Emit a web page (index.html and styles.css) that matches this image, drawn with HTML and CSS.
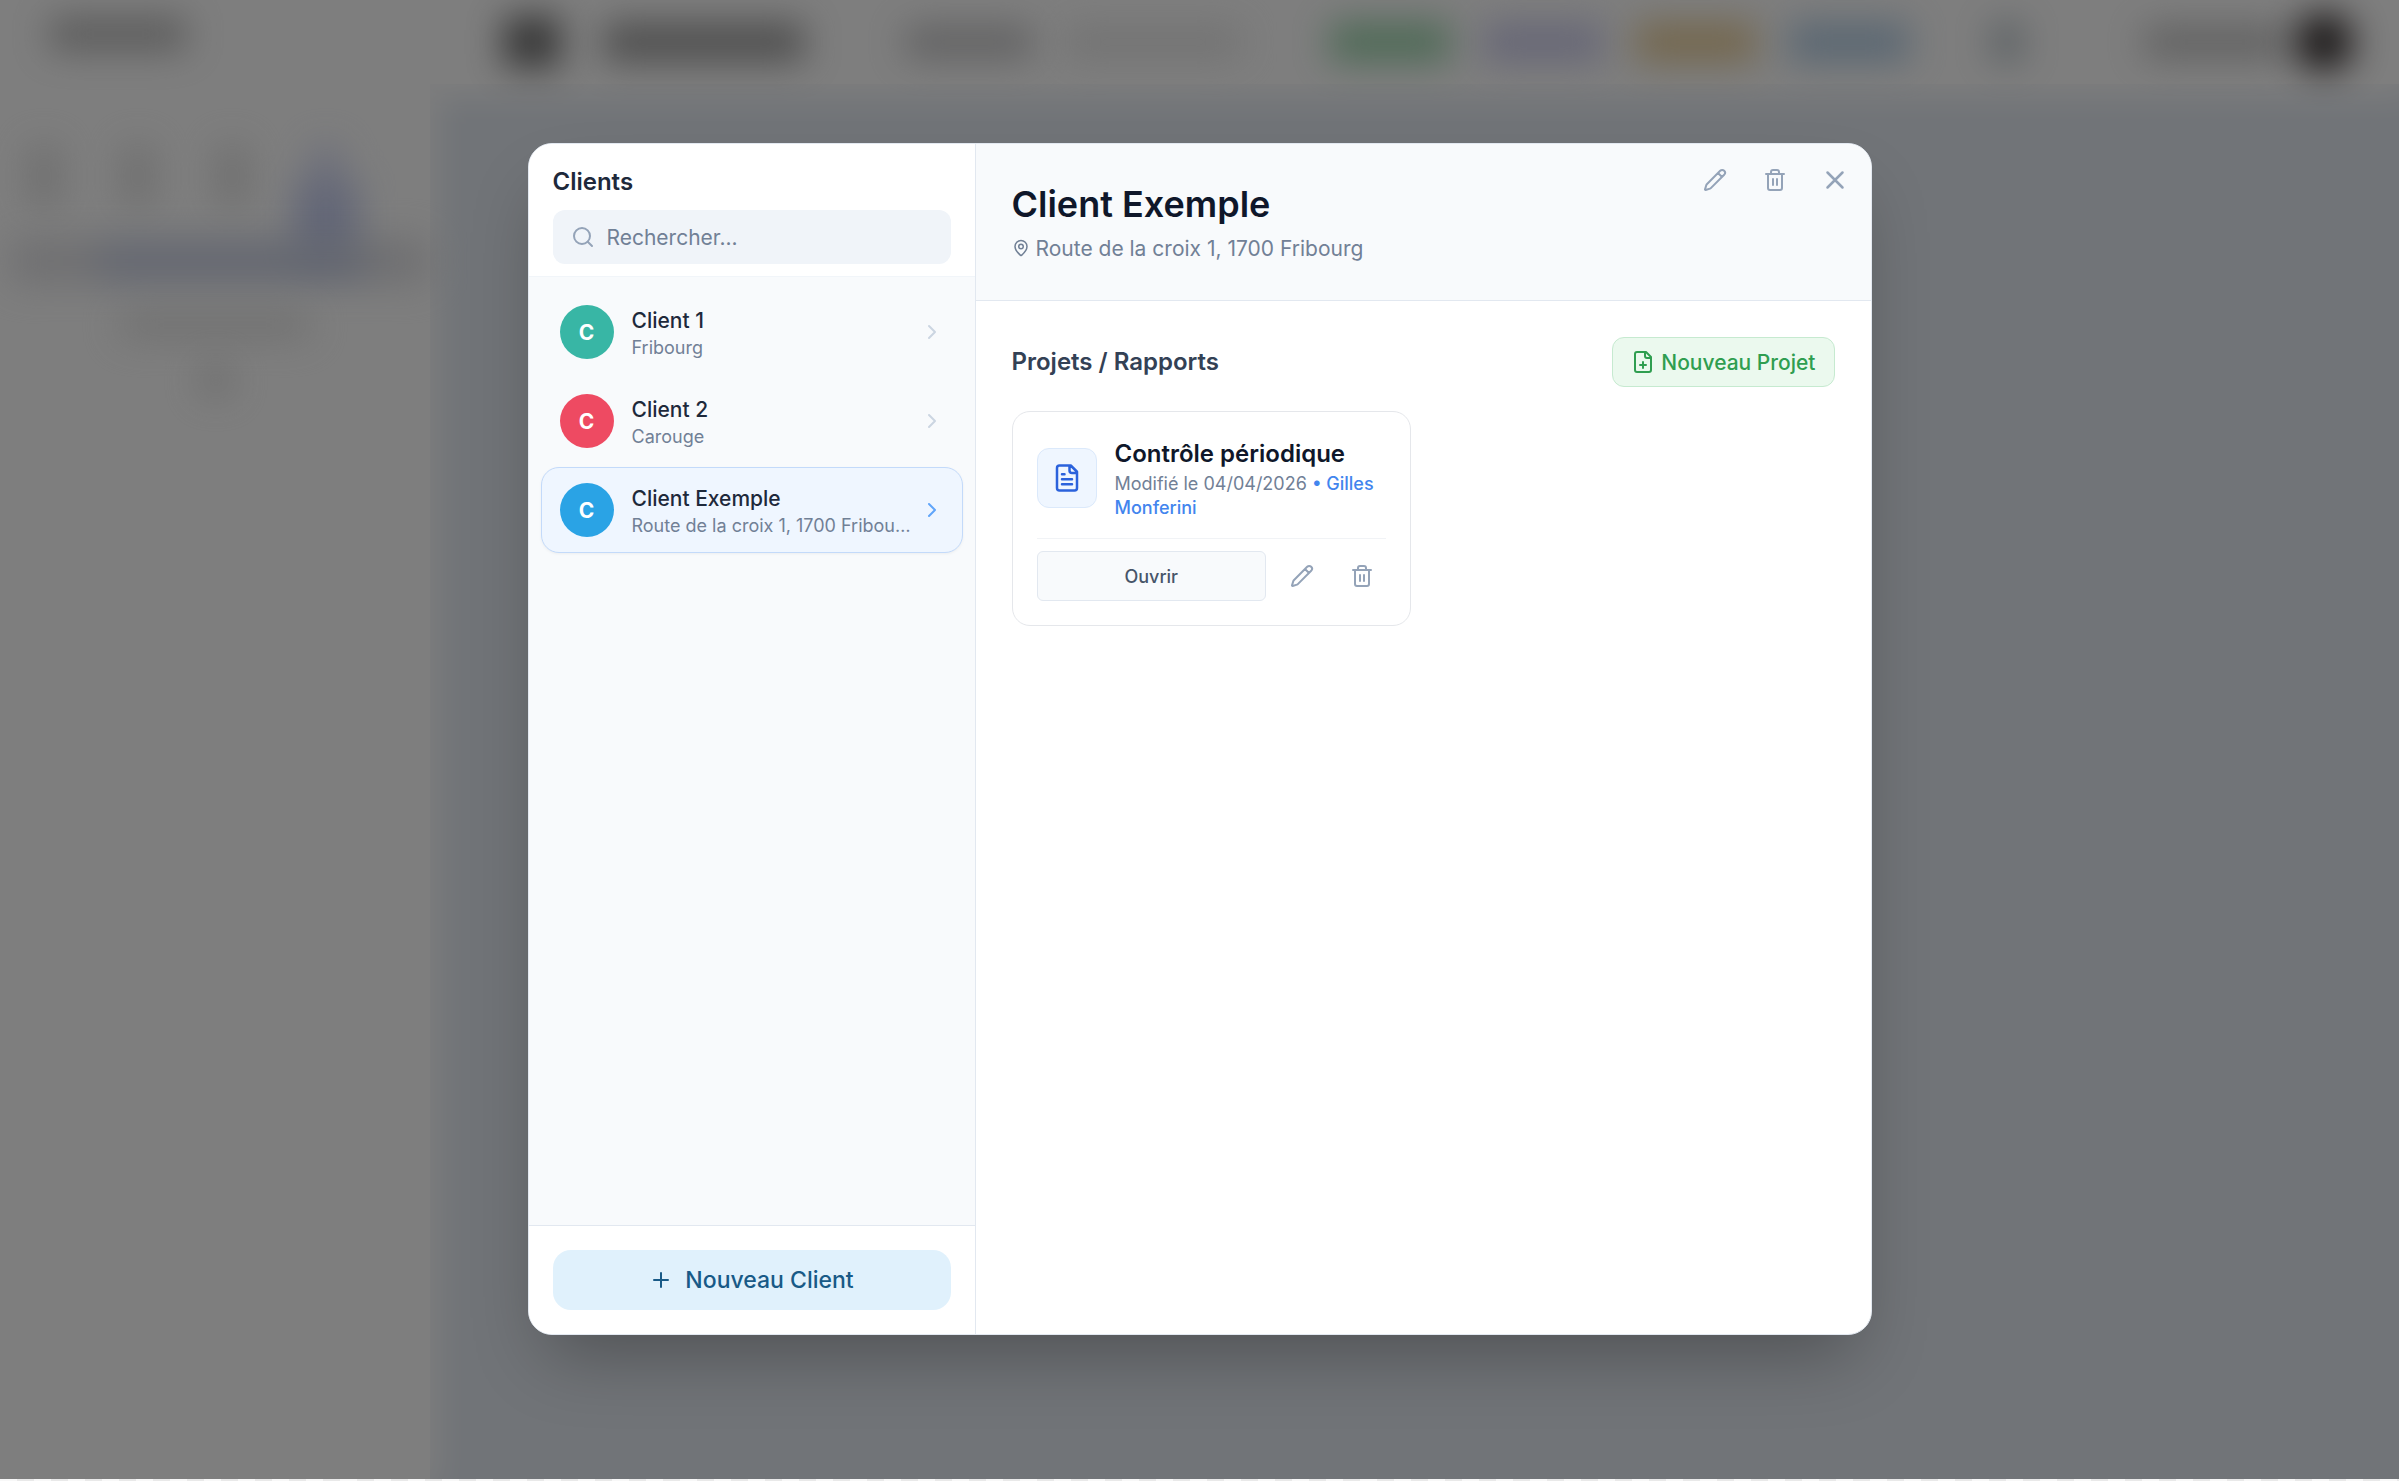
FILE: index.html
```html
<!DOCTYPE html>
<html lang="fr">
<head>
<meta charset="utf-8">
<meta name="viewport" content="width=device-width, initial-scale=1">
<title>Clients</title>
<link rel="stylesheet" href="styles.css">
</head>
<body>
<svg class="sprite" aria-hidden="true">
  <symbol id="i-search" viewBox="0 0 24 24"><circle cx="11" cy="11" r="8"/><path d="m21 21-4.3-4.3"/></symbol>
  <symbol id="i-chevron" viewBox="0 0 24 24"><path d="m9 18 6-6-6-6"/></symbol>
  <symbol id="i-plus" viewBox="0 0 24 24"><path d="M5 12h14M12 5v14"/></symbol>
  <symbol id="i-x" viewBox="0 0 24 24"><path d="M18 6 6 18M6 6l12 12"/></symbol>
  <symbol id="i-pin" viewBox="0 0 24 24"><path d="M20 10c0 4.993-5.539 10.193-7.399 11.799a1 1 0 0 1-1.202 0C9.539 20.193 4 14.993 4 10a8 8 0 0 1 16 0"/><circle cx="12" cy="10" r="3"/></symbol>
  <symbol id="i-pencil" viewBox="0 0 24 24"><path d="M21.174 6.812a1 1 0 0 0-3.986-3.987L3.842 16.174a2 2 0 0 0-.5.83l-1.321 4.352a.5.5 0 0 0 .623.622l4.353-1.32a2 2 0 0 0 .83-.497zM15 5l4 4"/></symbol>
  <symbol id="i-trash" viewBox="0 0 24 24"><path d="M3 6h18M19 6v14a2 2 0 0 1-2 2H7a2 2 0 0 1-2-2V6M8 6V4a2 2 0 0 1 2-2h4a2 2 0 0 1 2 2v2M10 11v6M14 11v6"/></symbol>
  <symbol id="i-file" viewBox="0 0 24 24"><path d="M15 2H6a2 2 0 0 0-2 2v16a2 2 0 0 0 2 2h12a2 2 0 0 0 2-2V7ZM14 2v4a2 2 0 0 0 2 2h4M10 9H8M16 13H8M16 17H8"/></symbol>
  <symbol id="i-file-plus" viewBox="0 0 24 24"><path d="M15 2H6a2 2 0 0 0-2 2v16a2 2 0 0 0 2 2h12a2 2 0 0 0 2-2V7ZM14 2v4a2 2 0 0 0 2 2h4M9 15h6M12 18v-6"/></symbol>
</svg>

<div class="app" aria-hidden="true">
  <div class="rail">
    <div class="rail-title"></div>
    <div class="rail-tabs"><i></i><i></i><i></i><i class="on"></i></div>
    <div class="rail-bar"></div>
    <div class="rail-note"></div>
    <div class="rail-dot"></div>
  </div>
  <div class="stage">
    <div class="topbar">
      <i class="logo"></i><i class="brand"></i>
      <i class="crumb"></i><i class="crumb faint"></i>
      <i class="pill green"></i><i class="pill violet"></i><i class="pill amber"></i><i class="pill sky"></i>
      <i class="tool"></i><i class="user"></i><i class="face"></i>
    </div>
  </div>
</div>

<div class="overlay">
  <section class="dialog" role="dialog" aria-modal="true" aria-labelledby="dialog-title">
    <aside class="sidebar">
      <header class="side-head">
        <h2 class="side-title" id="dialog-title">Clients</h2>
        <label class="search">
          <svg class="icon"><use href="#i-search"/></svg>
          <input type="search" placeholder="Rechercher..." aria-label="Rechercher">
        </label>
      </header>
      <nav class="list">
        <a class="client" href="#client-1">
          <span class="avatar teal">C</span>
          <span class="who"><span class="name">Client 1</span><span class="place">Fribourg</span></span>
          <svg class="icon"><use href="#i-chevron"/></svg>
        </a>
        <a class="client" href="#client-2">
          <span class="avatar red">C</span>
          <span class="who"><span class="name">Client 2</span><span class="place">Carouge</span></span>
          <svg class="icon"><use href="#i-chevron"/></svg>
        </a>
        <a class="client active" href="#client-exemple" aria-current="true">
          <span class="avatar blue">C</span>
          <span class="who"><span class="name">Client Exemple</span><span class="place">Route de la croix 1, 1700 Fribourg</span></span>
          <svg class="icon"><use href="#i-chevron"/></svg>
        </a>
      </nav>
      <footer class="side-foot">
        <button class="new-client" type="button"><svg class="icon"><use href="#i-plus"/></svg>Nouveau Client</button>
      </footer>
    </aside>

    <main class="detail">
      <header class="detail-head">
        <div>
          <h1 class="client-title">Client Exemple</h1>
          <p class="address"><svg class="icon small"><use href="#i-pin"/></svg>Route de la croix 1, 1700 Fribourg</p>
        </div>
        <div class="actions">
          <button class="icon-btn" type="button" aria-label="Modifier le client"><svg class="icon"><use href="#i-pencil"/></svg></button>
          <button class="icon-btn" type="button" aria-label="Supprimer le client"><svg class="icon"><use href="#i-trash"/></svg></button>
          <button class="icon-btn" type="button" aria-label="Fermer"><svg class="icon large"><use href="#i-x"/></svg></button>
        </div>
      </header>
      <div class="detail-body">
        <div class="section-head">
          <h2 class="section-title">Projets / Rapports</h2>
          <button class="new-project" type="button"><svg class="icon"><use href="#i-file-plus"/></svg>Nouveau Projet</button>
        </div>
        <div class="cards">
          <article class="card">
            <div class="card-top">
              <span class="tile"><svg class="icon large"><use href="#i-file"/></svg></span>
              <div>
                <h3 class="card-title">Contrôle périodique</h3>
                <p class="meta">Modifié le 04/04/2026 <span class="author">• Gilles Monferini</span></p>
              </div>
            </div>
            <div class="card-actions">
              <button class="open" type="button">Ouvrir</button>
              <button class="icon-btn" type="button" aria-label="Modifier le projet"><svg class="icon"><use href="#i-pencil"/></svg></button>
              <button class="icon-btn" type="button" aria-label="Supprimer le projet"><svg class="icon"><use href="#i-trash"/></svg></button>
            </div>
          </article>
        </div>
      </div>
    </main>
  </section>
</div>
<div class="edge"></div>
</body>
</html>
```

FILE: styles.css
```css
* { box-sizing: border-box; }

body {
  margin: 0;
  min-height: 100vh;
  display: grid;
  grid-template-rows: 1fr 2px;
  font-family: Inter, "Noto Sans", sans-serif;
  color: #1e293b;
  overflow: hidden;
}

h1, h2, h3, p { margin: 0; }
button, input { font: inherit; }
button { cursor: pointer; }
.sprite { position: absolute; width: 0; height: 0; }

.icon {
  flex: none;
  width: 24px;
  height: 24px;
  fill: none;
  stroke: currentColor;
  stroke-width: 2;
  stroke-linecap: round;
  stroke-linejoin: round;
}
.icon.small { width: 18px; height: 18px; }
.icon.large { width: 30px; height: 30px; }

/* Application behind the dialog, out of focus */
.app, .overlay { grid-area: 1 / 1; }
.app { display: flex; background: #e2e8f0; overflow: hidden; }
.rail { flex: none; width: 430px; background: #fcfcfc; box-shadow: 0 0 30px 8px #fcfcfc; }
.rail > div:not(.rail-tabs), .app i { filter: blur(18px); opacity: 0.85; }
.rail-title { width: 136px; height: 32px; margin: 18px 0 0 50px; background: #a8a8a8; }
.rail-tabs { display: flex; gap: 66px; padding: 96px 0 0 30px; }
.rail-tabs i { width: 28px; height: 60px; background: #d4d4d4; }
.rail-tabs .on { height: 44px; background: #ccd2f4; box-shadow: 0 52px 0 18px #bcc5ec; }
.rail-bar { height: 46px; margin: 32px 0 0 10px; background: linear-gradient(90deg, #dcdce0 18%, #c2c9de 24%, #c2c9de 80%, #dcdce0 90%); }
.rail-note { width: 190px; height: 26px; margin: 28px 0 0 120px; background: #dcdcdc; }
.rail-dot { width: 28px; height: 28px; margin: 28px 0 0 202px; background: #cccccc; }
.stage { flex: 1; }
.topbar { display: flex; align-items: center; height: 84px; padding: 0 46px 0 74px; background: #fcfcfc; box-shadow: 0 0 30px 12px #fcfcfc; }
.topbar i { flex: none; height: 38px; }
.topbar .logo { width: 56px; height: 50px; background: #505050; }
.topbar .brand { width: 200px; margin-left: 44px; background: #8a8a8a; }
.topbar .crumb { width: 126px; height: 30px; margin-left: 102px; background: #b4b4b6; }
.topbar .faint { width: 174px; margin-left: 34px; background: #e0e0e0; }
.topbar .pill { width: 120px; margin-left: auto; }
.topbar .pill ~ .pill { margin-left: 33px; }
.topbar .green { background: #88cc9c; }
.topbar .violet { background: #c4c4ea; }
.topbar .amber { background: #e4c484; }
.topbar .sky { background: #a4c4e0; }
.topbar .tool { width: 28px; margin-left: 84px; background: #a0aeb6; }
.topbar .user { width: 140px; height: 28px; margin-left: 124px; background: #b0b0b0; }
.topbar .face { width: 58px; height: 58px; margin-left: 10px; border-radius: 50%; background: #100808; }

.overlay {
  z-index: 1;
  display: flex;
  justify-content: center;
  padding: 143px 24px 144px;
  background: rgba(0, 0, 0, 0.5);
}

.edge { background: repeating-linear-gradient(90deg, #f8f8f8 0 17px, #e9e9e9 17px 34px); }

.dialog {
  display: flex;
  width: 100%;
  max-width: 1344px;
  border: 1px solid #e2e8f0;
  border-radius: 24px;
  background: #fff;
  box-shadow: 0 36px 72px -18px rgba(0, 0, 0, 0.3);
  overflow: hidden;
}

/* Client list */
.sidebar {
  flex: none;
  width: 447px;
  display: flex;
  flex-direction: column;
  border-right: 1px solid #e2e8f0;
  background: #f8fafc;
}
.side-head { padding: 21px 24px 12px; border-bottom: 1px solid #f1f5f9; background: #fff; }
.side-title { margin-bottom: 12px; font-size: 24px; line-height: 33px; font-weight: 600; }
.search {
  display: flex;
  align-items: center;
  gap: 12px;
  height: 54px;
  padding: 0 18px;
  border-radius: 12px;
  background: #f0f4f9;
  color: #94a3b8;
}
.search input { flex: 1; min-width: 0; padding: 0; border: 0; outline: 0; background: none; color: #1e293b; font-size: 21px; }
.search input::placeholder { color: #718096; }

.list { flex: 1; display: flex; flex-direction: column; gap: 3px; padding: 12px; }
.client {
  display: flex;
  align-items: center;
  gap: 8px;
  height: 86px;
  padding: 0 18px;
  border: 1px solid transparent;
  border-radius: 18px;
  color: #cbd5e1;
  text-decoration: none;
}
.client.active { border-color: #c3dafa; background: #eff6ff; color: #60a5fa; box-shadow: 0 1px 3px rgba(0, 0, 0, 0.05); }
.avatar {
  flex: none;
  display: grid;
  place-items: center;
  width: 54px;
  height: 54px;
  border-radius: 50%;
  color: #fff;
  font-size: 21px;
  font-weight: 700;
}
.teal { background: #38b6a5; }
.red { background: #ee4a62; }
.blue { background: #2aa3e5; }
.who { flex: 1; min-width: 0; display: flex; flex-direction: column; padding: 3px 0 0 10px; }
.name { color: #1e293b; font-size: 21px; line-height: 28px; font-weight: 500; }
.place { color: #718096; font-size: 18px; line-height: 26px; overflow: hidden; white-space: nowrap; text-overflow: ellipsis; }

.side-foot { padding: 24px; border-top: 1px solid #e2e8f0; background: #fff; }
.new-client {
  display: flex;
  align-items: center;
  justify-content: center;
  gap: 12px;
  width: 100%;
  height: 60px;
  border: 0;
  border-radius: 18px;
  background: #e0f1fc;
  color: #185a87;
  font-size: 23px;
  font-weight: 500;
}

/* Selected client */
.detail { flex: 1; min-width: 0; display: flex; flex-direction: column; }
.detail-head {
  display: flex;
  justify-content: space-between;
  padding: 36px 12px 32px 36px;
  border-bottom: 1px solid #e2e8f0;
  background: #f8fafc;
}
.client-title { font-size: 36px; line-height: 48px; font-weight: 600; color: #0f172a; }
.address { display: flex; align-items: center; gap: 6px; height: 40px; color: #718096; font-size: 21px; }
.actions { display: flex; gap: 12px; margin-top: -24px; }
.icon-btn {
  display: grid;
  place-items: center;
  width: 48px;
  height: 48px;
  padding: 0;
  border: 0;
  border-radius: 12px;
  background: none;
  color: #94a3b8;
}
.detail-body { flex: 1; padding: 36px; }
.section-head { display: flex; align-items: center; justify-content: space-between; margin-bottom: 24px; }
.section-title { font-size: 24px; line-height: 36px; font-weight: 600; color: #334155; }
.new-project {
  display: flex;
  align-items: center;
  gap: 6px;
  height: 50px;
  padding: 0 18px;
  border: 1px solid #c6ead0;
  border-radius: 12px;
  background: #ebf9ee;
  color: #2f9e50;
  font-size: 21px;
  font-weight: 500;
}

.cards { display: grid; grid-template-columns: repeat(2, 1fr); gap: 24px; }
.card { padding: 24px; border: 1px solid #e5e7eb; border-radius: 18px; }
.card-top { display: flex; align-items: center; gap: 18px; padding-bottom: 18px; border-bottom: 1px solid #f1f3f6; }
.tile {
  flex: none;
  display: grid;
  place-items: center;
  width: 60px;
  height: 60px;
  border: 1px solid #dbe9fb;
  border-radius: 12px;
  background: #eff6ff;
  color: #2b62dc;
}
.card-title { font-size: 24px; line-height: 36px; font-weight: 600; color: #0f172a; }
.meta { font-size: 18px; line-height: 24px; color: #718096; }
.author { color: #4285ee; font-weight: 500; }
.card-actions { display: flex; align-items: center; gap: 12px; padding-top: 12px; }
.open {
  flex: 1;
  height: 50px;
  border: 1px solid #e2e8f0;
  border-radius: 6px;
  background: #f8fafc;
  color: #475569;
  font-size: 18px;
  font-weight: 500;
}
```
